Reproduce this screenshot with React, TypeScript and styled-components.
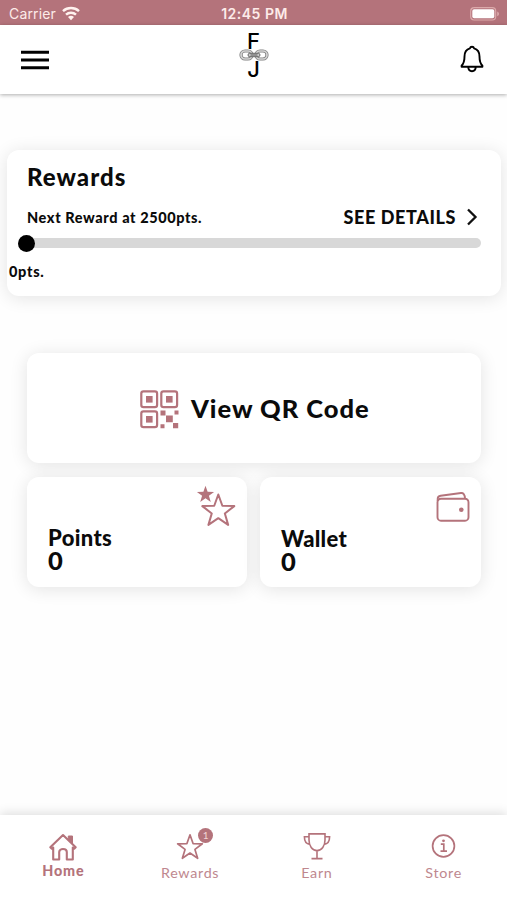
import React from 'react';
import styled, { createGlobalStyle } from 'styled-components';

const rose = '#b4737b';

const GlobalStyle = createGlobalStyle`
  * { box-sizing: border-box; }
  body { margin: 0; background: #fff; color: #0b0b0b; font-family: Lato, 'Open Sans', sans-serif; overflow: hidden; }
  svg { display: block; flex: none; }
  button { border: 0; background: none; padding: 0; color: inherit; font: inherit; }
`;

const Screen = styled.div`
  width: 507px;
  height: 900px;
  display: flex;
  flex-direction: column;
  background: #fefefe;
`;

const StatusBar = styled.div`
  height: 25px;
  flex: none;
  display: grid;
  grid-template-columns: 1fr auto 1fr;
  align-items: center;
  padding: 2px 7px 0 9px;
  background: ${rose};
  color: #fdebe9;
  font: 400 14px Inter, sans-serif;
`;

const Carrier = styled.div`
  display: flex;
  align-items: center;
  gap: 6px;
  letter-spacing: 0.15px;
`;

const Time = styled.div`
  font-weight: 600;
  font-size: 14px;
  letter-spacing: 0.5px;
`;

const Battery = styled.div`
  justify-self: end;
`;

const Header = styled.header`
  height: 69px;
  flex: none;
  display: grid;
  grid-template-columns: 1fr 30px 1fr;
  align-items: center;
  padding: 0 23px 0 21px;
  background: #fff;
  box-shadow: 0 1px 4px rgba(0, 0, 0, 0.32);
`;

const BellButton = styled.button`
  justify-self: end;
  margin-bottom: 2px;
`;

const Logo = styled.div`
  display: flex;
  flex-direction: column;
  align-items: center;
  padding: 0 0 9px 2px;
  font: 500 22px/16px Inter, sans-serif;
  color: #000;
`;

const Main = styled.main`
  flex: 1;
  display: flex;
  flex-direction: column;
  padding-top: 56px;
`;

const Card = styled.section`
  background: #fff;
  border-radius: 12px;
  box-shadow: 0 2px 18px rgba(0, 0, 0, 0.11);
`;

const RewardsCard = styled(Card)`
  height: 146px;
  margin: 0 6px 0 7px;
  padding: 12px 20px 0;
`;

const Label = styled.div<{ $size: number; $line: number; $spacing?: number }>`
  font-size: ${p => p.$size}px;
  line-height: ${p => p.$line}px;
  letter-spacing: ${p => p.$spacing ?? 0}px;
  font-weight: 900;
  white-space: nowrap;
`;

const RewardRow = styled.div`
  display: flex;
  justify-content: space-between;
  align-items: center;
  height: 26px;
  margin-top: 13px;
`;

const Details = styled.button`
  display: flex;
  align-items: center;
  gap: 10px;
  padding: 0 3px 2px 0;
`;

const Track = styled.div`
  height: 10px;
  margin-top: 7px;
  display: flex;
  align-items: center;
  border-radius: 5px;
  background: #d8d8d8;
`;

const Knob = styled.div`
  width: 17px;
  height: 17px;
  margin-left: -9px;
  border-radius: 50%;
  background: #000;
`;

const Progress = styled.div`
  margin: 13px 0 0 -18px;
`;

const Actions = styled.div`
  display: grid;
  grid-template-columns: 220px 221px;
  grid-template-rows: 110px 110px;
  gap: 14px 13px;
  margin: 57px 26px 0 27px;
`;

const QrCard = styled(Card)`
  grid-column: 1 / -1;
  display: flex;
  align-items: center;
  gap: 12px;
  padding-left: 113px;

  svg {
    margin-top: 3px;
  }
`;

const Tile = styled(Card)`
  display: flex;
  flex-direction: column;
  padding: 8px 11px 0 21px;
`;

const TileIcon = styled.div<{ $drop?: number }>`
  align-self: flex-end;
  height: 41px;
  padding-top: ${p => p.$drop ?? 0}px;
`;

const NavBar = styled.nav`
  height: 85px;
  flex: none;
  display: grid;
  grid-template-columns: repeat(4, 1fr);
  background: #fff;
  box-shadow: 0 -2px 10px rgba(0, 0, 0, 0.13);
`;

const NavItem = styled.a<{ $active?: boolean }>`
  display: flex;
  flex-direction: column;
  align-items: center;
  padding-top: ${p => (p.$active ? 18 : 16)}px;
  color: ${rose};
`;

const NavLabel = styled.span<{ $active?: boolean }>`
  font-size: 14.3px;
  line-height: 18px;
  margin-top: ${p => (p.$active ? -1 : 3)}px;
  font-weight: ${p => (p.$active ? 900 : 400)};
  letter-spacing: ${p => (p.$active ? 0.9 : 0.7)}px;
  opacity: ${p => (p.$active ? 1 : 0.85)};
`;

const IconBox = styled.div`
  position: relative;
  height: 30px;
`;

const Badge = styled.span`
  position: absolute;
  left: 23px;
  top: -3px;
  width: 15px;
  height: 15px;
  border-radius: 50%;
  background: ${rose};
  color: #f1d5d5;
  font-size: 10px;
  line-height: 15px;
  text-align: center;
`;

const starPoints = (cx: number, cy: number, r: number, inner = 0.4) =>
  Array.from({ length: 10 }, (_, i) => {
    const a = -Math.PI / 2 + (i * Math.PI) / 5;
    const d = i % 2 ? r * inner : r;
    return `${(cx + d * Math.cos(a)).toFixed(2)},${(cy + d * Math.sin(a)).toFixed(2)}`;
  }).join(' ');

const Wifi = () => (
  <svg width="18" height="15" viewBox="0 0 18 15" fill="none" stroke="#fff2ef" strokeWidth="2.5">
    <path d="M1 5.1a12.2 12.2 0 0 1 16 0M4 8.6a7.6 7.6 0 0 1 10 0" />
    <path d="M6 11.1a4.7 4.7 0 0 1 6 0L9 14.3z" fill="#fff2ef" stroke="none" />
  </svg>
);

const BatteryIcon = () => (
  <svg width="30" height="14" viewBox="0 0 30 14">
    <rect x=".7" y=".7" width="25" height="12.3" rx="3.5" fill="none" stroke="#dba9aa" strokeWidth="1.2" />
    <rect x="2.3" y="2.3" width="22" height="9" rx="1.8" fill="#fff" />
    <path d="M27.2 4.5c2.4 1 2.4 3.8 0 4.8z" fill="#dba9aa" />
  </svg>
);

const Chain = () => (
  <svg width="30" height="12" viewBox="0 0 30 12" fill="none">
    <g stroke="#808080" strokeWidth="3.2">
      <rect x="2" y="2" width="11" height="8" rx="4" />
      <rect x="17" y="2" width="11" height="8" rx="4" />
    </g>
    <g stroke="#d2d2d2" strokeWidth="1.7">
      <rect x="2" y="2" width="11" height="8" rx="4" />
      <rect x="17" y="2" width="11" height="8" rx="4" />
    </g>
    <rect x="9" y="4.3" width="12" height="3.4" rx="1.7" fill="#ccc" stroke="#666" />
    <path d="M11.5 6h7" stroke="#555" />
  </svg>
);

const Bell = () => (
  <svg width="24" height="28" viewBox="1 1 24 28" fill="none" stroke="#000" strokeWidth="1.9" strokeLinejoin="round">
    <path d="M10.9 4.4c.5-2.2 3.7-2.2 4.2 0 3.9 1.1 5.4 4 5.4 8.1 0 5 .5 6.7 2.9 9.2v1H2.6v-1c2.4-2.5 2.9-4.2 2.9-9.2 0-4.1 1.5-7 5.4-8.1zM9.2 22.8c.1 2.8 1.5 4.4 3.8 4.4s3.7-1.6 3.8-4.4" />
  </svg>
);

const QrIcon = () => (
  <svg width="39" height="39" viewBox="0 0 39 39" fill={rose}>
    {[[0, 0], [20, 0], [0, 20]].map(([x, y]) => (
      <g key={`${x}-${y}`}>
        <rect x={x + 1.3} y={y + 1.3} width="15.8" height="15.8" rx="2.2" fill="none" stroke={rose} strokeWidth="2.2" />
        <rect x={x + 6} y={y + 6} width="6.6" height="6.6" />
      </g>
    ))}
    <path d="M20.5 20.5h5v5h-5zM34.5 20.5h4v4h-4zM26 25.5h6.8v6.8H26zM20.5 34.3h4v4h-4zM33 33h5.2v5.2H33z" />
  </svg>
);

const Stars = () => (
  <svg width="40" height="42" viewBox="0 0 40 42">
    <polygon points={starPoints(9.5, 9.7, 9)} fill={rose} />
    <polygon points={starPoints(22.3, 26.3, 16.8, 0.41)} fill="none" stroke={rose} strokeWidth="2" strokeLinejoin="round" />
  </svg>
);

const WalletIcon = () => (
  <svg width="34" height="34" viewBox="0 0 34 34" fill="none" stroke={rose} strokeWidth="1.9" strokeLinejoin="round">
    <rect x="1.5" y="9.7" width="31" height="22" rx="3.5" />
    <path d="M1.7 12V9.8c0-1.9 1.1-2.8 2.9-3.1L25 4c2.2-.3 3.8 1.3 4 5.5" />
    <circle cx="25.3" cy="20.7" r="2.3" fill={rose} stroke="none" />
  </svg>
);

const HomeIcon = () => (
  <svg width="30" height="30" viewBox="-1 0.5 30 30" fill="none" stroke={rose} strokeWidth="2.1" strokeLinejoin="round">
    <path d="M1.3 14.8 14 2.6l12.7 12.2-1.5 1.4L23.8 15v12h-6v-7.5c0-4-7.6-4-7.6 0V27h-6V15l-1.4 1.2z" />
    <path d="M19.3 3.5h4.2v7.8l-4.2-3.8z" fill={rose} strokeWidth="1" />
  </svg>
);

const StarIcon = () => (
  <svg width="30" height="30" viewBox="0 0 30 30">
    <polygon points={starPoints(15, 16.8, 13, 0.4)} fill="none" stroke={rose} strokeWidth="1.7" strokeLinejoin="round" />
  </svg>
);

const Trophy = () => (
  <svg width="30" height="30" viewBox="0 0 30 30" fill="none" stroke={rose} strokeWidth="1.6">
    <path d="M7 2.9h16V9c0 6-3.2 10.6-8 10.6S7 15 7 9zM7 5.8H2.4c0 4.4 1.8 7.2 5.5 7.6M23 5.8h4.6c0 4.4-1.8 7.2-5.5 7.6M15 19.6v7.8M9.5 27.6h11" />
  </svg>
);

const Info = () => (
  <svg width="30" height="30" viewBox="0 0 30 30" fill="none" stroke={rose} strokeWidth="1.7">
    <circle cx="14.5" cy="15" r="10.9" />
    <path d="M11.8 13.1h3v6.8M11.5 20.2H18" />
    <circle cx="14.5" cy="9.8" r="1.4" fill={rose} stroke="none" />
  </svg>
);

export default function App() {
  return (
    <Screen>
      <GlobalStyle />
      <StatusBar>
        <Carrier><span>Carrier</span><Wifi /></Carrier>
        <Time>12:45 PM</Time>
        <Battery><BatteryIcon /></Battery>
      </StatusBar>
      <Header>
        <button aria-label="Menu">
          <svg width="28" height="20" viewBox="0 0 28 20" stroke="#000" strokeWidth="3">
            <path d="M0 2.2h28M0 10h28M0 17.8h28" />
          </svg>
        </button>
        <Logo><span>F</span><Chain /><span>J</span></Logo>
        <BellButton aria-label="Notifications"><Bell /></BellButton>
      </Header>
      <Main>
        <RewardsCard>
          <Label $size={24} $line={30} $spacing={1.05}>Rewards</Label>
          <RewardRow>
            <Label $size={14.5} $line={26} $spacing={0.6}>Next Reward at 2500pts.</Label>
            <Details>
              <Label $size={18} $line={24} $spacing={0.6}>SEE DETAILS</Label>
              <svg width="12" height="18" viewBox="0 0 12 18" fill="none" stroke="#111" strokeWidth="2.3">
                <path d="m2 1.5 7.5 7.5L2 16.5" />
              </svg>
            </Details>
          </RewardRow>
          <Track><Knob /></Track>
          <Progress><Label $size={14.5} $line={22} $spacing={0.7}>0pts.</Label></Progress>
        </RewardsCard>
        <Actions>
          <QrCard>
            <QrIcon />
            <Label $size={25.5} $line={32} $spacing={0.97}>View QR Code</Label>
          </QrCard>
          <Tile>
            <TileIcon><Stars /></TileIcon>
            <Label $size={22} $line={24} $spacing={0.35}>Points</Label>
            <Label $size={25.5} $line={20}>0</Label>
          </Tile>
          <Tile>
            <TileIcon $drop={4}><WalletIcon /></TileIcon>
            <Label $size={22} $line={25} $spacing={0.3}>Wallet</Label>
            <Label $size={25.5} $line={20}>0</Label>
          </Tile>
        </Actions>
      </Main>
      <NavBar>
        <NavItem $active><IconBox><HomeIcon /></IconBox><NavLabel $active>Home</NavLabel></NavItem>
        <NavItem><IconBox><StarIcon /><Badge>1</Badge></IconBox><NavLabel>Rewards</NavLabel></NavItem>
        <NavItem><IconBox><Trophy /></IconBox><NavLabel>Earn</NavLabel></NavItem>
        <NavItem><IconBox><Info /></IconBox><NavLabel>Store</NavLabel></NavItem>
      </NavBar>
    </Screen>
  );
}
